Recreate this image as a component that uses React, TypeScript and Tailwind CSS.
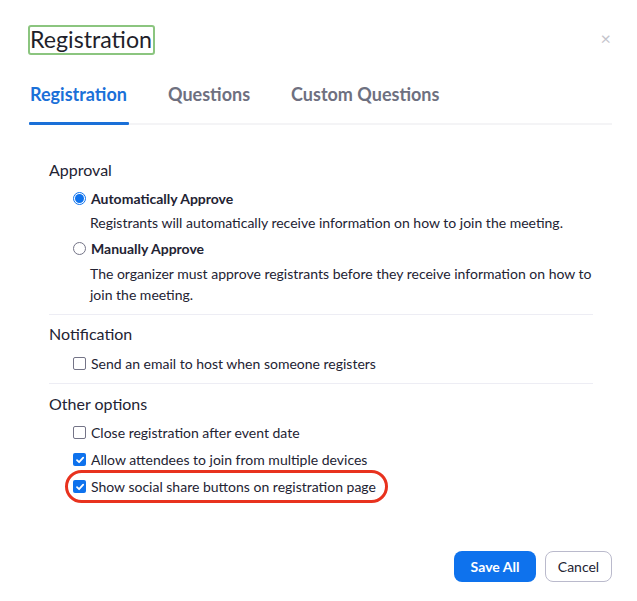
import React from 'react';

function Radio({ checked }: { checked?: boolean }) {
  return checked ? (
    <span className="w-[13px] h-[13px] rounded-full border border-[#0e72ed] bg-white flex items-center justify-center shrink-0">
      <span className="w-[9px] h-[9px] rounded-full bg-[#0e72ed]" />
    </span>
  ) : (
    <span className="w-[13px] h-[13px] rounded-full border border-[#747487] bg-white shrink-0" />
  );
}

function Checkbox({ checked }: { checked?: boolean }) {
  return checked ? (
    <span className="w-[13px] h-[13px] rounded-[2px] bg-[#0e72ed] flex items-center justify-center shrink-0">
      <svg width="10" height="10" viewBox="0 0 10 10" fill="none">
        <path d="M2 5.2 L4.1 7.2 L8.2 2.6" stroke="white" strokeWidth="1.8" strokeLinecap="round" strokeLinejoin="round" />
      </svg>
    </span>
  ) : (
    <span className="w-[13px] h-[13px] rounded-[2px] border border-[#747487] bg-white shrink-0" />
  );
}

function CheckRow({ label, checked }: { label: string; checked?: boolean }) {
  return (
    <div className="flex items-center gap-[5px] h-[27px]">
      <Checkbox checked={checked} />
      <span>{label}</span>
    </div>
  );
}

export default function App() {
  return (
    <div className="w-[637px] h-[601px] bg-white text-[#232333] relative" style={{ fontFamily: 'Lato, "Open Sans", sans-serif' }}>
      <div className="flex items-start justify-between pl-[28px] pr-[26px] pt-[25px]">
        <h1 className="border-2 border-[#8bc57f] rounded-[3px] pr-[1px] h-[30px] flex items-center text-[23.2px] leading-none text-[#1f1f2b]">
          Registration
        </h1>
        <span className="text-[#c4c4cc] text-[18px] leading-none mt-[4px]">×</span>
      </div>

      <div className="ml-[29px] mr-[25px] mt-[26px] border-b-2 border-[#f4f4f6] flex gap-[41px] text-[18px] font-bold h-[44px]">
        <div className="relative text-[#1a70d8] pl-[1px]">
          Registration
          <span className="absolute left-0 right-[-2px] bottom-[-2px] h-[3px] bg-[#1a70d8] rounded-[1px]" />
        </div>
        <div className="text-[#6e7080]">Questions</div>
        <div className="text-[#6e7080]">Custom Questions</div>
      </div>

      <div className="ml-[49px] mr-[44px] mt-[34px] text-[14px]">
        <div className="border-b border-[#ededf4] pb-[9px]">
          <div className="text-[16px] leading-[22px]">Approval</div>
          <div className="ml-[24px] mt-[5px]">
            <div className="flex items-center gap-[5px] h-[24px] font-bold">
              <Radio checked />
              <span>Automatically Approve</span>
            </div>
            <div className="pl-[17px] leading-[21px] mt-[2px]">Registrants will automatically receive information on how to join the meeting.</div>
            <div className="flex items-center gap-[5px] h-[24px] font-bold mt-[3px]">
              <Radio />
              <span>Manually Approve</span>
            </div>
            <div className="pl-[17px] leading-[21px] mt-[3px]">
              The organizer must approve registrants before they receive information on how to join the meeting.
            </div>
          </div>
        </div>

        <div className="border-b border-[#ededf4] pt-[8px] pb-[6px]">
          <div className="text-[16px] leading-[22px]">Notification</div>
          <div className="ml-[24px] mt-[5px]">
            <CheckRow label="Send an email to host when someone registers" />
          </div>
        </div>

        <div className="pt-[9px]">
          <div className="text-[16px] leading-[22px]">Other options</div>
          <div className="ml-[24px] mt-[4px]">
            <CheckRow label="Close registration after event date" />
            <CheckRow label="Allow attendees to join from multiple devices" checked />
            <div className="relative">
              <CheckRow label="Show social share buttons on registration page" checked />
              <span className="absolute left-[-8px] top-[-3px] w-[323px] h-[33px] border-[3px] border-[#e8321e] rounded-[17px]" />
            </div>
          </div>
        </div>
      </div>

      <div className="absolute right-[25px] bottom-[19px] flex gap-[9px] text-[14px]">
        <button className="w-[82px] h-[31px] rounded-[8px] bg-[#0e72ed] text-white font-bold">Save All</button>
        <button className="w-[67px] h-[31px] rounded-[8px] border border-[#babacc] bg-white text-[#232333]">Cancel</button>
      </div>
    </div>
  );
}
